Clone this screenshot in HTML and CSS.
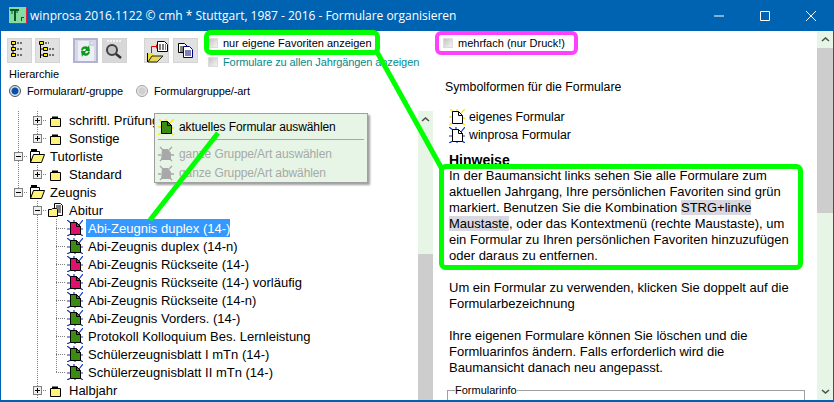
FILE: index.html
```html
<!DOCTYPE html>
<html lang="de">
<head>
<meta charset="utf-8">
<title>winprosa - Formulare organisieren</title>
<link rel="stylesheet" href="styles.css">
</head>
<body>
<svg class="defs" width="0" height="0">
  <defs>
    <g id="page"><path d="M3.500 2.500h6l4 4v8h-10z" stroke="#000"/><path d="M9.500 2.500v4h4" fill="none" stroke="#000"/></g>
    <symbol id="own" viewBox="0 0 16 16"><path d="M1 0l3 3M16 0l-4 4M0 8h3M8 0v2M0 16l3-2M16 16l-3-2M13 9h3" stroke="#ffe600" stroke-width="1.300"/><use href="#page"/></symbol>
    <symbol id="wp" viewBox="0 0 16 16"><path d="M0 0l4 3M16 0l-4 5M0 9h3M7 0v2M0 16l4-2M16 16l-3-2M8 15v1M13 9h3" stroke="#1038c8" stroke-width="1.200"/><use href="#page"/></symbol>
    <symbol id="dis" viewBox="0 0 16 16"><path d="M2 1l3 3M14 1l-3 3M0 9h3M2 15l3-3M14 15l-3-3M13 9h3" stroke="#a8a8a8" stroke-width="1.400"/><path d="M4 3h6l3 4v7H3z" fill="#a8a8a8"/></symbol>
    <symbol id="fclosed" viewBox="0 0 16 16"><path d="M2.500 6.500h10v8h-10z" fill="#fff27a" stroke="#000"/><path d="M4 4.500h6v2H4z" fill="#000"/></symbol>
    <symbol id="fopen" viewBox="0 0 16 16"><path d="M2 1h6v2H2z" fill="#000"/><path d="M1.500 3.500h9v3H5l-3.500 8z" fill="#fff" stroke="#000"/><path d="M1.500 14.500l3-8h11l-3 8z" fill="#fff27a" stroke="#000"/></symbol>
    <symbol id="fdoc" viewBox="0 0 16 16"><path d="M6.500 1.500h6l2 2v10h-8z" fill="#fff" stroke="#000"/><path d="M8 4h5M8 6h5M8 8h5M8 10h5" stroke="#000"/><path d="M.5 7.500h3l1-1h4l1 1v7h-9z" fill="#fff27a" stroke="#000"/></symbol>
  </defs>
</svg>

<div class="window">
  <header class="titlebar">
    <svg class="app-icon" viewBox="0 0 18 17" width="18" height="17"><path d="M0 0h17v16H0z" fill="#86dca0"/><path d="M17 0h1v17H1v-1h16z" fill="#e8174c"/><path d="M1 2h9v2H7v10H5V4H1z" fill="#0b5a22"/><path d="M3 3v4M8 3v3" stroke="#0b5a22"/><path d="M12 10h1v4h-1zM13 10h2v1h-2z" fill="#0b5a22"/></svg>
    <span class="title-text">winprosa 2016.1122 © cmh * Stuttgart, 1987 - 2016 - Formulare organisieren</span>
    <div class="controls">
      <span class="ctl"><svg width="10" height="10" viewBox="0 0 10 10"><path d="M0 5h10" stroke="#fff"/></svg></span>
      <span class="ctl"><svg width="10" height="10" viewBox="0 0 10 10"><path d="M.5.5h9v9h-9z" fill="none" stroke="#fff"/></svg></span>
      <span class="ctl"><svg width="10" height="10" viewBox="0 0 10 10"><path d="M0 0l10 10M10 0L0 10" stroke="#fff"/></svg></span>
    </div>
  </header>

  <div class="main">
    <section class="left">
      <div class="toolbar">
        <div class="tool-group group-a">
          <button class="tool"><svg width="25" height="25" viewBox="0 0 25 25"><path d="M6 6v12" stroke="#000"/><path d="M4.500 3.500h4v3h-4zM4.500 9.500h4v3h-4zM4.500 15.500h4v3h-4z" fill="#ffec00" stroke="#000"/><path d="M10 5h6M10 11h6M10 17h6" stroke="#000" stroke-dasharray="2 1"/></svg></button>
          <button class="tool"><svg width="25" height="25" viewBox="0 0 25 25"><path d="M5.500 5v15M5 11h4M5 17h4" stroke="#000"/><path d="M4.500 3.500h4v3h-4zM8.500 9.500h4v3h-4zM8.500 15.500h4v3h-4z" fill="#ffec00" stroke="#000"/><path d="M10 5h4M14 11h6M14 17h6" stroke="#000" stroke-dasharray="2 1"/></svg></button>
        </div>
        <div class="tool-group group-b">
          <button class="tool tool-active"><svg width="25" height="25" viewBox="0 0 25 25"><path d="M5 3h12l4 4v16H5z" fill="#eeeef6"/><path d="M17 3v4h4" fill="none" stroke="#b0b4d0"/><path d="M8 12a4.500 4.500 0 0 1 7-3l1-2 1 6h-5l1-2a2.500 2.500 0 0 0-3.500 2zM17 14a4.500 4.500 0 0 1-7 3l-1 2-1-6h5l-1 2a2.500 2.500 0 0 0 3.500-2z" fill="#0d9a1c"/></svg></button>
          <button class="tool tool-plain"><svg width="25" height="25" viewBox="0 0 25 25"><path d="M5 3h15" stroke="#f4f4f4" stroke-width="2" stroke-dasharray="2 1"/><circle cx="10" cy="12" r="5" fill="#c4c4c4" stroke="#404040" stroke-width="2"/><path d="M14 16l5 4" stroke="#303030" stroke-width="2.500"/></svg></button>
        </div>
        <div class="tool-group group-c">
          <button class="tool"><svg width="25" height="25" viewBox="0 0 25 25"><path d="M13.500 3.500h7l3 3v7h-10z" fill="#fff" stroke="#000"/><path d="M15 7h7M15 9h7M15 11h7" stroke="#000" stroke-dasharray="2 1"/><path d="M7.500 16V8.500H13" fill="none" stroke="#e00000"/><path d="M12 6l2 2.500-2 2.500z" fill="#e00000"/><path d="M3 15h1v9H3z" fill="#000"/><path d="M4 15h5v9H4z" fill="#f0e030"/><path d="M4 24l4-6h11l-6 6z" fill="#e8d84a" stroke="#222"/></svg></button>
          <button class="tool"><svg width="25" height="25" viewBox="0 0 25 25"><path d="M5.500 5.500h6l3 3v6h-9z" fill="#fff" stroke="#000"/><path d="M7 9h4M7 11h3M7 13h3" stroke="#000"/><path d="M10.500 8.500h6l3 3v8h-9z" fill="#fff" stroke="#000080"/><path d="M12 13h6M12 15h6M12 17h6" stroke="#000080"/></svg></button>
        </div>
        <div class="options">
          <label class="check"><span class="box-check"></span>nur eigene Favoriten anzeigen</label>
          <label class="check check-teal"><span class="box-check"></span>Formulare zu allen Jahrgängen anzeigen</label>
        </div>
      </div>

      <div class="hier-title">Hierarchie</div>
      <div class="radios">
        <label class="radio"><span class="dot dot-on"></span>Formularart/-gruppe</label>
        <label class="radio"><span class="dot"></span>Formulargruppe/-art</label>
      </div>

      <div class="tree-wrap">
        <ul class="tree">
          <li class="row"><span class="c v"></span><span class="c v-h"><i class="box plus"></i></span><svg class="ico"><use href="#fclosed"/></svg><span class="lbl">schriftl. Prüfungen</span></li>
          <li class="row"><span class="c v"></span><span class="c end"><i class="box plus"></i></span><svg class="ico"><use href="#fclosed"/></svg><span class="lbl">Sonstige</span></li>
          <li class="row"><span class="c v-h"><i class="box minus"></i></span><svg class="ico"><use href="#fopen"/></svg><span class="lbl">Tutorliste</span></li>
          <li class="row"><span class="c v"></span><span class="c end"><i class="box plus"></i></span><svg class="ico"><use href="#fclosed"/></svg><span class="lbl">Standard</span></li>
          <li class="row"><span class="c end"><i class="box minus"></i></span><svg class="ico"><use href="#fopen"/></svg><span class="lbl">Zeugnis</span></li>
          <li class="row"><span class="c"></span><span class="c v-h"><i class="box minus"></i></span><svg class="ico"><use href="#fdoc"/></svg><span class="lbl">Abitur</span></li>
          <li class="row"><span class="c"></span><span class="c v"></span><span class="c v-h"></span><svg class="ico leaf pink"><use href="#wp"/></svg><span class="lbl sel">Abi-Zeugnis duplex (14-)</span></li>
          <li class="row"><span class="c"></span><span class="c v"></span><span class="c v-h"></span><svg class="ico leaf green"><use href="#wp"/></svg><span class="lbl">Abi-Zeugnis duplex (14-n)</span></li>
          <li class="row"><span class="c"></span><span class="c v"></span><span class="c v-h"></span><svg class="ico leaf pink"><use href="#wp"/></svg><span class="lbl">Abi-Zeugnis Rückseite (14-)</span></li>
          <li class="row"><span class="c"></span><span class="c v"></span><span class="c v-h"></span><svg class="ico leaf pink"><use href="#wp"/></svg><span class="lbl">Abi-Zeugnis Rückseite (14-) vorläufig</span></li>
          <li class="row"><span class="c"></span><span class="c v"></span><span class="c v-h"></span><svg class="ico leaf green"><use href="#wp"/></svg><span class="lbl">Abi-Zeugnis Rückseite (14-n)</span></li>
          <li class="row"><span class="c"></span><span class="c v"></span><span class="c v-h"></span><svg class="ico leaf green"><use href="#wp"/></svg><span class="lbl">Abi-Zeugnis Vorders. (14-)</span></li>
          <li class="row"><span class="c"></span><span class="c v"></span><span class="c v-h"></span><svg class="ico leaf green"><use href="#wp"/></svg><span class="lbl">Protokoll Kolloquium Bes. Lernleistung</span></li>
          <li class="row"><span class="c"></span><span class="c v"></span><span class="c v-h"></span><svg class="ico leaf green"><use href="#wp"/></svg><span class="lbl">Schülerzeugnisblatt I mTn (14-)</span></li>
          <li class="row"><span class="c"></span><span class="c v"></span><span class="c end"></span><svg class="ico leaf green"><use href="#wp"/></svg><span class="lbl">Schülerzeugnisblatt II mTn (14-)</span></li>
          <li class="row"><span class="c"></span><span class="c v-h"><i class="box plus"></i></span><svg class="ico"><use href="#fclosed"/></svg><span class="lbl">Halbjahr</span></li>
        </ul>
        <div class="scroll scroll-left">
          <span class="arrow"><svg width="9" height="5" viewBox="0 0 9 5"><path d="M1 4l3.500-3L8 4" fill="none" stroke="#505050" stroke-width="1.600"/></svg></span>
          <span class="spacer-left"></span>
          <span class="thumb"></span>
        </div>
      </div>
    </section>

    <section class="right">
      <label class="check multi"><span class="box-check"></span>mehrfach (nur Druck!)</label>
      <div class="sym-title">Symbolformen für die Formulare</div>
      <div class="sym-row"><svg class="ico-sym"><use href="#own"/></svg><span>eigenes Formular</span></div>
      <div class="sym-row"><svg class="ico-sym"><use href="#wp"/></svg><span>winprosa Formular</span></div>
      <div class="notes">
        <h3 class="notes-title">Hinweise</h3>
        <p class="para">In der Baumansicht links sehen Sie alle Formulare zum aktuellen Jahrgang, Ihre persönlichen Favoriten sind grün markiert. Benutzen Sie die Kombination <mark class="hl">STRG+linke Maustaste</mark>, oder das Kontextmenü (rechte Maustaste), um ein Formular zu Ihren persönlichen Favoriten hinzuzufügen oder daraus zu entfernen.</p>
        <p class="para">Um ein Formular zu verwenden, klicken Sie doppelt auf die Formularbezeichnung</p>
        <p class="para">Ihre eigenen Formulare können Sie löschen und die Formluarinfos ändern. Falls erforderlich wird die Baumansicht danach neu angepasst.</p>
      </div>
      <fieldset class="info"><legend class="info-legend">Formularinfo</legend></fieldset>
    </section>

    <div class="scroll scroll-right">
      <span class="arrow"><svg width="9" height="5" viewBox="0 0 9 5"><path d="M1 4l3.500-3L8 4" fill="none" stroke="#505050" stroke-width="1.600"/></svg></span>
      <span class="thumb thumb-right"></span>
      <span class="arrow arrow-end"><svg width="9" height="5" viewBox="0 0 9 5"><path d="M1 1l3.500 3L8 1" fill="none" stroke="#505050" stroke-width="1.600"/></svg></span>
    </div>
  </div>

  <div class="menu">
    <div class="menu-item"><svg class="ico leaf green"><use href="#own"/></svg>aktuelles Formular auswählen</div>
    <div class="menu-sep"></div>
    <div class="menu-item menu-off"><svg class="ico"><use href="#dis"/></svg>ganze Gruppe/Art auswählen</div>
    <div class="menu-item menu-off"><svg class="ico"><use href="#dis"/></svg>ganze Gruppe/Art abwählen</div>
  </div>

  <svg class="notes-overlay" width="834" height="402" viewBox="0 0 834 402">
    <path d="M377 52l65 117M218 133l-68 87" stroke="#00ff00" stroke-width="5" fill="none"/>
    <rect x="206.500" y="32.500" width="171" height="20" rx="4" fill="none" stroke="#00ff00" stroke-width="5"/>
    <rect x="437" y="33" width="139" height="20" rx="4" fill="none" stroke="#ff40ff" stroke-width="4"/>
    <rect x="441.500" y="166.500" width="359" height="101" rx="4" fill="none" stroke="#00ff00" stroke-width="5"/>
  </svg>
</div>
</body>
</html>
```

FILE: styles.css
```css
* { box-sizing: border-box; }
html, body { margin: 0; padding: 0; }
body { width: 834px; height: 402px; overflow: hidden; background: #fff; font-family: "Liberation Sans", Arial, sans-serif; font-size: 13px; color: #000; }
.defs { display: block; height: 0; }
.window { position: relative; width: 834px; height: 402px; display: flex; flex-direction: column; background: #fff; overflow: hidden; }

.titlebar { height: 31px; flex: none; background: #0063b1; color: #fff; display: flex; align-items: center; padding-left: 9px; }
.app-icon { flex: none; margin-right: 3px; }
.title-text { font-family: "Open Sans", sans-serif; font-size: 12px; letter-spacing: -0.02px; flex: 1; white-space: nowrap; }
.controls { display: flex; flex: none; }
.ctl { width: 46px; height: 31px; display: flex; align-items: center; justify-content: center; }

.main { flex: 1; min-height: 0; display: flex; border-left: 1px solid #0063b1; border-right: 1px solid #0063b1; border-bottom: 2px solid #0063b1; }

.left { width: 432px; flex: none; display: flex; flex-direction: column; min-height: 0; }
.toolbar { height: 33px; margin-top: 2px; padding-left: 6px; display: flex; align-items: flex-start; flex: none; }
.tool-group { display: flex; margin-top: 5px; }
.group-a { gap: 3px; margin-right: 13px; }
.group-b { gap: 4px; margin-right: 17px; }
.group-c { gap: 4px; margin-right: 10px; }
.tool { width: 25px; height: 25px; padding: 0; border: 0; background: #e1e1e1; display: block; box-shadow: inset 0 0 0 1px #d4d4d4; }
.tool svg { display: block; }
.tool-active { background: #d8d8e4; box-shadow: inset 0 0 0 2px #b0b4d0; }
.tool-plain { background: #d8d8d8; }
.options { font-size: 11px; }
.check { display: flex; align-items: center; height: 19px; white-space: nowrap; font-size: 11px; }
.check-teal { color: #008b8b; letter-spacing: -0.1px; }
.box-check { width: 10px; height: 10px; margin-right: 5px; flex: none; background: linear-gradient(135deg, #c4c4c4, #f4f4f4); border: 1px solid #dcdcdc; }

.hier-title { height: 16px; line-height: 16px; font-size: 11px; padding-left: 8px; flex: none; }
.radios { height: 16px; margin: 1px 0 12px; padding-left: 8px; display: flex; gap: 13px; font-size: 11px; letter-spacing: -0.1px; flex: none; }
.radio { display: flex; align-items: center; white-space: nowrap; }
.dot { width: 12px; height: 12px; margin-right: 6px; border-radius: 50%; background: radial-gradient(circle, #d0d0d0 0 3px, #f0f0f0 5px); border: 1px solid #a0a0a0; }
.dot-on { background: radial-gradient(circle, #0a4fa8 0 3px, #d8e4f4 4px); border-color: #505050; }

.tree-wrap { flex: 1; min-height: 0; display: flex; }
.tree { flex: 1; margin: 0; padding: 0 0 0 8px; list-style: none; overflow: hidden; }
.row { display: flex; height: 18px; align-items: center; white-space: nowrap; }
.c { width: 19px; height: 18px; flex: none; display: block; }
.v { background: repeating-linear-gradient(to bottom, #808080 0 1px, transparent 1px 2px) 9px 0 / 1px 100% no-repeat; }
.v-h { background: repeating-linear-gradient(to bottom, #808080 0 1px, transparent 1px 2px) 9px 0 / 1px 100% no-repeat, repeating-linear-gradient(to right, #808080 0 1px, transparent 1px 2px) 9px 9px / 10px 1px no-repeat; }
.end { background: repeating-linear-gradient(to bottom, #808080 0 1px, transparent 1px 2px) 9px 0 / 1px 9px no-repeat, repeating-linear-gradient(to right, #808080 0 1px, transparent 1px 2px) 9px 9px / 10px 1px no-repeat; }
.box { display: block; width: 9px; height: 9px; margin: 5px 0 0 5px; border: 1px solid #808080; background-color: #f0f0f0; background-repeat: no-repeat; }
.plus { background-image: linear-gradient(#000, #000), linear-gradient(#000, #000); background-size: 5px 1px, 1px 5px; background-position: 1px 3px, 3px 1px; }
.minus { background-image: linear-gradient(#000, #000); background-size: 5px 1px; background-position: 1px 3px; }
.ico { width: 16px; height: 16px; flex: none; margin: 0 2px 0 1px; fill: #fff; }
.leaf.pink { fill: #e0106c; }
.leaf.green { fill: #3a8c12; }
.lbl { margin-left: 1px; padding: 0 0 0 2px; height: 18px; line-height: 20px; }
.sel { background: #3399ff; color: #fff; }

.scroll { display: flex; flex-direction: column; background: #e6f5e6; flex: none; }
.scroll-left { width: 15px; }
.arrow { height: 17px; flex: none; display: flex; align-items: center; justify-content: center; }
.spacer-left { height: 126px; flex: none; }
.thumb { flex: 1; background: #cdcdcd; }
.thumb-right { flex: none; height: 165px; }
.arrow-end { margin-top: auto; }
.scroll-right { width: 16px; flex: none; }

.right { flex: 1; min-width: 0; padding-left: 12px; overflow: hidden; }
.multi { margin: 2px 0 0 -2px; }
.sym-title { margin-top: 27px; height: 16px; line-height: 16px; font-size: 12.3px; }
.sym-row { height: 18px; display: flex; align-items: center; padding-left: 4px; font-size: 12.3px; }
.sym-title + .sym-row { margin-top: 13px; }
.ico-sym { width: 16px; height: 16px; flex: none; margin-right: 4px; fill: #fff; }
.notes { padding-left: 4px; width: 354px; margin-top: 8px; }
.notes-title { margin: 0; font-size: 14px; line-height: 16px; height: 16px; font-weight: bold; }
.para { margin: 0 0 16px; line-height: 16px; }
.hl { background: #d8d8e0; color: inherit; }
.info { margin: -8px 0 0 2px; padding: 0 0 0 7px; width: 358px; height: 40px; border: 1px solid #a0a0a0; }
.info-legend { padding: 0; font-size: 11px; }

.menu { position: absolute; left: 154px; top: 113px; width: 214px; height: 70px; background: #e6f5e6; border: 1px solid #a0a0a0; box-shadow: 2px 2px 2px #a0a0a0; padding: 3px 3px; font-size: 12px; letter-spacing: -0.1px; }
.menu-item { display: flex; align-items: center; height: 19px; white-space: nowrap; }
.menu-item .ico { margin: 0 5px 0 0; }
.menu-sep { height: 1px; background: #a8a8a8; margin: 3px 0 4px; }
.menu-off { color: #a8a8a8; }
.notes-overlay { position: absolute; left: 0; top: 0; pointer-events: none; }
```
